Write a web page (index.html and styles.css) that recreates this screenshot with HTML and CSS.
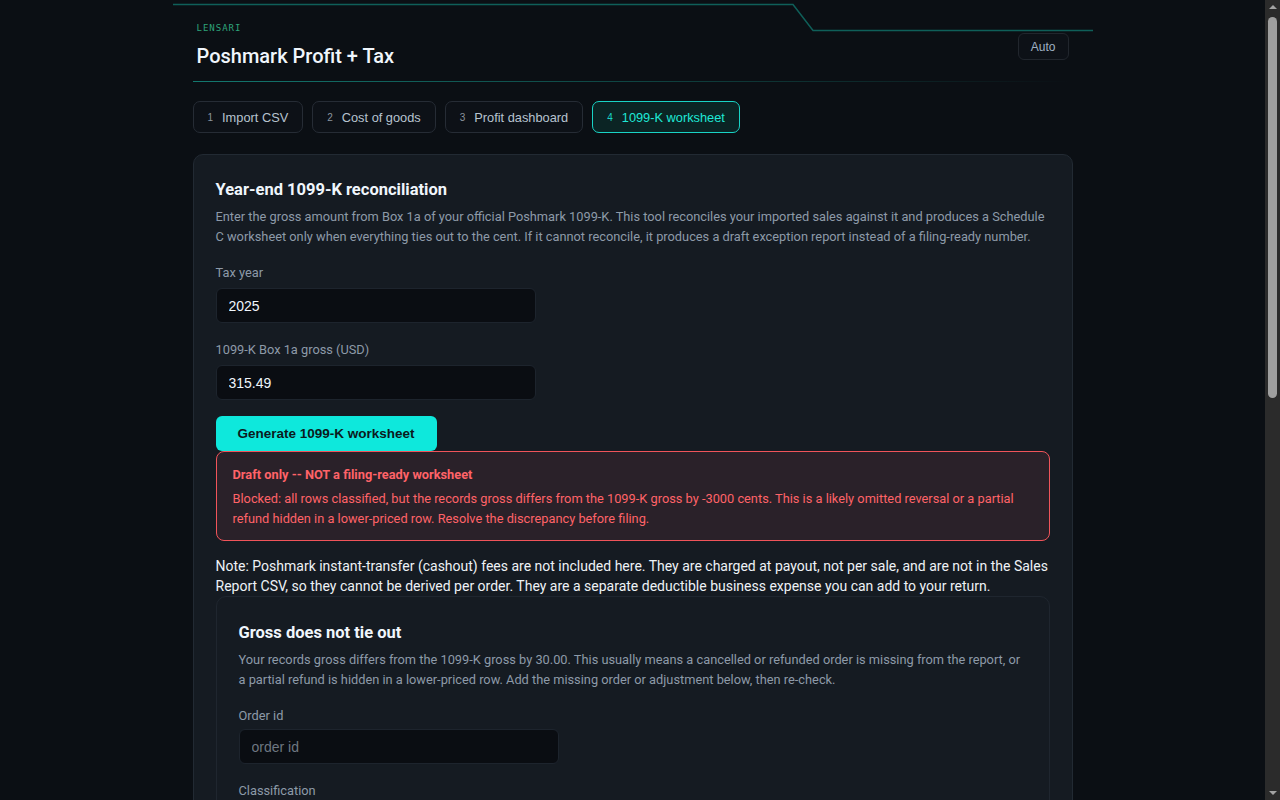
FILE: index.html
```html
<!DOCTYPE html>
<html lang="en">
<head>
    <meta charset="UTF-8">
    <meta name="viewport" content="width=device-width, initial-scale=1.0">
    <title>Poshmark Profit + Tax</title>
    <link rel="stylesheet" href="styles.css">
</head>
<body>
    <div class="container">
        <header class="header">
            <svg class="header-trace" width="920" height="34" viewBox="0 0 920 34" aria-hidden="true">
                <polyline points="0,4.5 620,4.5 640,30.5 920,30.5" fill="none" stroke="#0f5f59" stroke-width="1.5"/>
            </svg>
            <div class="header-row">
                <div>
                    <div class="brand">LENSARI</div>
                    <h1>Poshmark Profit + Tax</h1>
                </div>
                <button class="theme-btn">Auto</button>
            </div>
        </header>

        <nav class="tabs">
            <button class="tab"><span class="tab-num">1</span>Import CSV</button>
            <button class="tab"><span class="tab-num">2</span>Cost of goods</button>
            <button class="tab"><span class="tab-num">3</span>Profit dashboard</button>
            <button class="tab active"><span class="tab-num">4</span>1099-K worksheet</button>
        </nav>

        <section class="card">
            <h2>Year-end 1099-K reconciliation</h2>
            <p class="muted">Enter the gross amount from Box 1a of your official Poshmark 1099-K. This tool reconciles your imported sales against it and produces a Schedule C worksheet only when everything ties out to the cent. If it cannot reconcile, it produces a draft exception report instead of a filing-ready number.</p>

            <label class="field">
                <span class="field-label">Tax year</span>
                <input class="input" type="text" value="2025">
            </label>

            <label class="field">
                <span class="field-label">1099-K Box 1a gross (USD)</span>
                <input class="input" type="text" value="315.49">
            </label>

            <button class="primary-btn">Generate 1099-K worksheet</button>

            <div class="alert">
                <div class="alert-title">Draft only -- NOT a filing-ready worksheet</div>
                <p>Blocked: all rows classified, but the records gross differs from the 1099-K gross by -3000 cents. This is a likely omitted reversal or a partial refund hidden in a lower-priced row. Resolve the discrepancy before filing.</p>
            </div>

            <p class="note">Note: Poshmark instant-transfer (cashout) fees are not included here. They are charged at payout, not per sale, and are not in the Sales Report CSV, so they cannot be derived per order. They are a separate deductible business expense you can add to your return.</p>

            <div class="subcard">
                <h2>Gross does not tie out</h2>
                <p class="muted">Your records gross differs from the 1099-K gross by 30.00. This usually means a cancelled or refunded order is missing from the report, or a partial refund is hidden in a lower-priced row. Add the missing order or adjustment below, then re-check.</p>

                <label class="field">
                    <span class="field-label">Order id</span>
                    <input class="input" type="text" placeholder="order id">
                </label>

                <label class="field">
                    <span class="field-label">Classification</span>
                    <select class="input">
                        <option>Cancelled order (reversal)</option>
                        <option>Partial refund</option>
                    </select>
                </label>

                <label class="field">
                    <span class="field-label">Amount (USD)</span>
                    <input class="input" type="text" placeholder="0.00">
                </label>

                <label class="field">
                    <span class="field-label">Date</span>
                    <input class="input" type="text" placeholder="YYYY-MM-DD">
                </label>

                <button class="primary-btn">Add adjustment and re-check</button>
            </div>

            <div class="subcard">
                <h2>Exception report</h2>
                <p class="muted">No filing-ready Schedule C figures are produced until the gross ties out to the cent.</p>
                <table class="summary">
                    <tr><td>Records gross</td><td>285.49</td></tr>
                    <tr><td>1099-K Box 1a gross</td><td>315.49</td></tr>
                    <tr><td>Difference</td><td>-30.00</td></tr>
                    <tr><td>Rows classified</td><td>All</td></tr>
                </table>
            </div>
        </section>

        <footer class="footer">Runs entirely in your browser. Nothing is uploaded.</footer>
    </div>

    <!-- window scrollbar as it appears in the capture -->
    <div class="scrollbar" aria-hidden="true">
        <span class="scroll-arrow up"></span>
        <span class="scroll-thumb"></span>
        <span class="scroll-arrow down"></span>
    </div>
</body>
</html>
```

FILE: styles.css
```css
* {
    margin: 0;
    padding: 0;
    box-sizing: border-box;
}

html {
    color-scheme: dark;
}

body {
    font-family: Roboto, "Noto Sans", sans-serif;
    background: #0b0f14;
    color: #e6edf3;
    font-size: 12.8px;
    line-height: 20px;
    padding-right: 15px;
}

.container {
    max-width: 920px;
    margin: 0 auto;
    padding: 0 20px 40px;
}

.header {
    position: relative;
    margin: 0 -20px;
    padding: 22px 24px 0 20px;
}

.header-trace {
    position: absolute;
    top: 0;
    left: 0;
}

.header-row {
    display: flex;
    justify-content: space-between;
    align-items: flex-start;
    padding-bottom: 12px;
    border-bottom: 1px solid transparent;
    border-image: linear-gradient(90deg, #13786f, rgba(19, 120, 111, 0.3) 70%, transparent) 1;
}

.brand {
    font-family: "DejaVu Sans Mono", monospace;
    font-size: 9px;
    letter-spacing: 1px;
    color: #2ea37a;
    line-height: 12px;
    padding-left: 4px;
}

.header h1 {
    font-size: 20px;
    font-weight: 500;
    color: #f0f6fc;
    line-height: 26px;
    margin-top: 9px;
    padding-left: 4px;
}

.theme-btn {
    font-family: "Liberation Sans", Arial, sans-serif;
    font-size: 12px;
    color: #9fb0c2;
    background: #0d1117;
    border: 1px solid #21262d;
    border-radius: 6px;
    padding: 0 12px;
    height: 27px;
    margin-top: 11px;
}

.tabs {
    display: flex;
    gap: 9px;
    margin: 19px 0 21px;
}

.tab {
    font-family: "Liberation Sans", Arial, sans-serif;
    font-size: 12.8px;
    color: #b7c3cf;
    background: #0d1117;
    border: 1px solid #262c35;
    border-radius: 7px;
    height: 32px;
    padding: 0 14px;
    display: flex;
    align-items: center;
}

.tab-num {
    font-size: 10px;
    color: #8b949e;
    margin-right: 9px;
}

.tab.active {
    color: #1ee8d6;
    background: #0b2424;
    border-color: #19d3c5;
}

.tab.active .tab-num {
    color: #19d3c5;
}

.card {
    background: #151b22;
    border: 1px solid #222a33;
    border-radius: 10px;
    padding: 24px 22px;
}

.card h2 {
    font-size: 16.5px;
    font-weight: 700;
    color: #f0f6fc;
    line-height: 22px;
    margin-bottom: 6px;
}

.muted {
    color: #8d9aa8;
}

.field {
    display: block;
    margin-top: 16px;
}

.field + .field {
    margin-top: 17px;
}

.field-label {
    display: block;
    color: #8d9aa8;
    margin-bottom: 5px;
}

.subcard .field-label {
    margin-bottom: 3px;
}

.input {
    display: block;
    width: 320px;
    height: 35px;
    background: #0a0d12;
    border: 1px solid #1d242d;
    border-radius: 6px;
    padding: 0 12px;
    font-family: "Liberation Sans", Arial, sans-serif;
    font-size: 14px;
    color: #f0f6fc;
    outline: none;
}

.input::placeholder {
    color: #6e7781;
}

.primary-btn {
    display: block;
    margin-top: 16px;
    height: 35px;
    padding: 0 22px;
    background: #0ee8dc;
    color: #0b1a1d;
    border: none;
    border-radius: 6px;
    font-family: "Liberation Sans", Arial, sans-serif;
    font-size: 13.5px;
    font-weight: 700;
}

.alert {
    background: #2a2129;
    border: 1px solid #f0545a;
    border-radius: 8px;
    padding: 13px 16px 11px;
    color: #ff6368;
}

.alert-title {
    font-weight: 700;
    margin-bottom: 4px;
}

.note {
    margin-top: 15px;
    color: #eef2f6;
    font-size: 14px;
}

.subcard {
    border: 1px solid #1f262f;
    border-radius: 10px;
    padding: 25px 22px 24px;
}

.subcard + .subcard {
    margin-top: 16px;
}

.summary {
    margin-top: 12px;
    border-collapse: collapse;
    width: 100%;
}

.summary td {
    padding: 6px 0;
    border-bottom: 1px solid #222a33;
    color: #c9d1d9;
}

.summary td:last-child {
    text-align: right;
    font-family: "Liberation Mono", monospace;
}

.footer {
    text-align: center;
    color: #6e7781;
    padding: 28px 0 0;
}

.scrollbar {
    position: fixed;
    top: 0;
    right: 0;
    bottom: 0;
    width: 15px;
    background: #2b2b2b;
    display: flex;
    flex-direction: column;
    align-items: center;
}

.scroll-arrow {
    width: 0;
    height: 0;
    border-left: 4px solid transparent;
    border-right: 4px solid transparent;
}

.scroll-arrow.up {
    margin-top: 5px;
    border-bottom: 4px solid #a3a3a3;
}

.scroll-arrow.down {
    margin-top: auto;
    margin-bottom: 5px;
    border-top: 4px solid #a3a3a3;
}

.scroll-thumb {
    width: 9px;
    height: 381px;
    margin-top: 8px;
    background: #9f9f9f;
    border-radius: 5px;
}
```
